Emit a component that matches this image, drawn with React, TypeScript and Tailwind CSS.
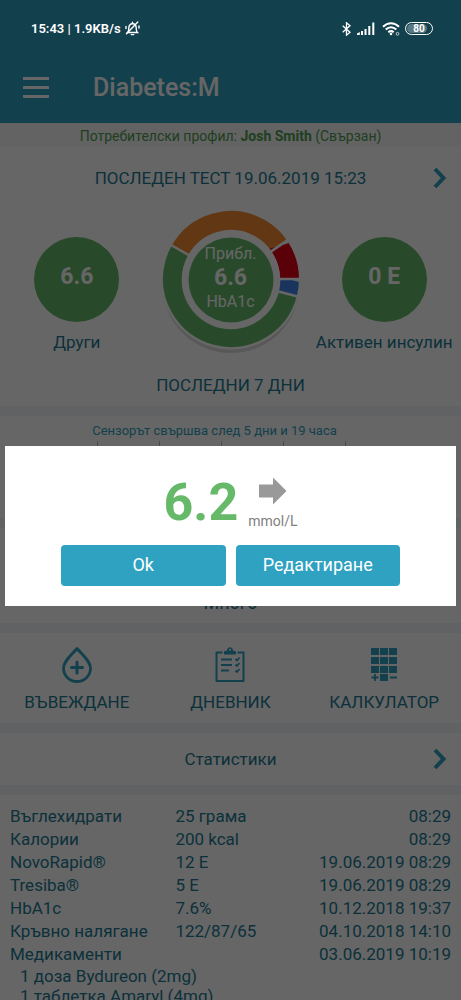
import { useState } from "react"
import type { ReactNode } from "react"

const stats = [
  { name: "Въглехидрати", value: "25 грама", time: "08:29" },
  { name: "Калории", value: "200 kcal", time: "08:29" },
  { name: "NovoRapid®", value: "12 E", time: "19.06.2019 08:29" },
  { name: "Tresiba®", value: "5 E", time: "19.06.2019 08:29" },
  { name: "HbA1c", value: "7.6%", time: "10.12.2018 19:37" },
  { name: "Кръвно налягане", value: "122/87/65", time: "04.10.2018 14:10" },
  { name: "Медикаменти", value: "", time: "03.06.2019 10:19" },
]

const medications = ["1 доза Bydureon (2mg)", "1 таблетка Amaryl (4mg)"]

// start / sweep in degrees, clockwise from three o'clock
const segments = [
  { start: 0, sweep: 14.7, color: "#4285e8" },
  { start: 14.7, sweep: 194.8, color: "#67b96a" },
  { start: 209.5, sweep: 116, color: "#f58b32" },
  { start: 325.5, sweep: 34.5, color: "#e20018" },
]

function StatusBar() {
  return (
    <div className="relative z-20 flex h-[51px] items-center justify-between pt-[6px] pr-7 pl-[31px] text-white">
      <div className="flex items-center gap-1 text-[13px] font-semibold">
        <span>15:43 | 1.9KB/s</span>
        <svg width="15" height="15" viewBox="0 0 15 15" fill="none" stroke="currentColor" strokeWidth="1.4" strokeLinecap="round">
          <path d="M2.5 11.5c1-1 1.3-2 1.3-4.3C3.8 4.5 5.3 2.8 7.5 2.8c2.2 0 3.7 1.7 3.7 4.4 0 2.3.4 3.3 1.3 4.300z" />
          <path d="M6.2 13.6h2.6M1.5 12.8 12.8 1M7.5 1.3v1M1 5.5v2M14 5v2" />
        </svg>
      </div>
      <div className="flex items-center">
        <svg width="9" height="14" viewBox="0 0 9 14" fill="none" stroke="currentColor" strokeWidth="1.3">
          <path d="M.7 3.8 8 10.3 4.5 13.2V.8L8 3.7.7 10.2" />
        </svg>
        <svg className="ml-[6px]" width="18" height="13" viewBox="0 0 18 13" fill="currentColor">
          <path d="M0 13v-1.5L2.8 10v3zM4 9h2v4H4zM7.5 7h2v6h-2zM11.3 4h2v9h-2zM15.3 .5h2V13h-2z" />
        </svg>
        <svg className="ml-[7px]" width="19" height="14" viewBox="0 0 19 14" fill="none" stroke="currentColor" strokeWidth="2">
          <path d="M1 4.7C5.8 0 12.2 0 17 4.7M3.7 7.6c3.2-3 7.4-3 10.6 0M6.3 10.300c1.700-1.500 3.700-1.500 5.400 0" />
          <circle cx="9" cy="12" r="1.3" fill="currentColor" stroke="none" />
          <circle cx="15.5" cy="11.8" r="1.4" strokeWidth="1" opacity=".7" />
        </svg>
        <span className="relative ml-1 flex h-[13px] w-7 items-center justify-center rounded-full border border-white text-[10px] leading-none font-bold">
          <span className="absolute inset-y-px left-px w-5 rounded-full bg-white/30" />
          <span className="relative">80</span>
        </span>
      </div>
    </div>
  )
}

function Chevron() {
  return (
    <svg width="14" height="22" viewBox="0 0 14 22" fill="none" stroke="#2fa1c1" strokeWidth="4">
      <path d="M2 2l8.5 9L2 20" />
    </svg>
  )
}

function Bubble({ value, label }: { value: string; label: string }) {
  return (
    <div className="flex flex-col items-center pt-[27px]">
      <div className="flex size-[85px] items-center justify-center rounded-full bg-[#67b96a] pb-1 text-[23px] font-bold text-white">
        {value}
      </div>
      <div className="mt-2 leading-6 whitespace-nowrap">{label}</div>
    </div>
  )
}

function Donut() {
  return (
    <div className="relative flex justify-center">
      <svg width="141" height="145" viewBox="-71 -69 141 145">
        <circle cx="0" cy="5.5" r="68.5" fill="#dcdcdc" />
        <circle cx="0" cy="0.5" r="70" fill="#fff" />
        {segments.map((s) => (
          <circle
            key={s.color}
            r="58.5"
            fill="none"
            stroke={s.color}
            strokeWidth="19"
            pathLength="360"
            strokeDasharray={`${s.sweep} ${360 - s.sweep}`}
            transform={`rotate(${s.start})`}
          />
        ))}
        {segments.map((s) => (
          <path key={s.color} d="M47 0H70" stroke="#fff" strokeWidth="2.5" transform={`rotate(${s.start})`} />
        ))}
        <circle cx="0" cy="1" r="49.3" fill="#fff" />
        <circle cx="0" cy="1" r="42.5" fill="#67b96a" />
      </svg>
      <div className="absolute inset-0 flex flex-col items-center pt-8 text-center text-white">
        <span className="text-base leading-6">Прибл.</span>
        <span className="text-[23px] leading-6 font-bold">6.6</span>
        <span className="text-base leading-6">HbA1c</span>
      </div>
    </div>
  )
}

function NavButton({ label, children }: { label: string; children: ReactNode }) {
  return (
    <button type="button" className="flex flex-col items-center pt-3 pb-[9px]">
      <svg width="38" height="38" viewBox="0 0 38 38" fill="none" stroke="#2fa1c1">
        {children}
      </svg>
      <span className="mt-1 pt-[3px] leading-6">{label}</span>
    </button>
  )
}

function GlucoseDialog({ onClose }: { onClose: () => void }) {
  return (
    <div className="absolute inset-0 z-10 flex items-center justify-center bg-black/60 px-[5px] pt-[51px]">
      <div role="dialog" aria-modal="true" aria-label="6.2 mmol/L" className="w-full bg-white px-14 pt-7 pb-5">
        <div className="flex justify-center gap-[10px]">
          <span className="text-[52px] leading-[58px] font-bold text-[#67b96a]">6.2</span>
          <div className="flex h-[60px] flex-col">
            <svg className="mt-[3px] ml-[11px]" width="28" height="28" viewBox="0 0 28 28" fill="#999">
              <path d="M0 7.5h14V.5L27.5 14 14 27.5v-7H0z" />
            </svg>
            <span className="mt-[6px] text-sm leading-5 text-[#808080]">mmol/L</span>
          </div>
        </div>
        <div className="mt-[11px] flex gap-[10px]">
          <button type="button" onClick={onClose} className="h-[41px] flex-1 rounded bg-[#2fa1c1] text-lg text-white">
            Ok
          </button>
          <button type="button" onClick={onClose} className="h-[41px] flex-1 rounded bg-[#2fa1c1] text-lg text-white">
            Редактиране
          </button>
        </div>
      </div>
    </div>
  )
}

export default function App() {
  const [open, setOpen] = useState(true)

  return (
    <div className="relative h-screen overflow-hidden bg-[#f3f4fa] font-[Roboto,sans-serif] text-[17px] text-[#217a94]">
      <header className="bg-[#2fa1c1]">
        <StatusBar />
        <div className="flex h-[72px] items-center gap-11 pl-[23px] text-white">
          <button type="button" aria-label="Меню" className="flex w-[26px] flex-col gap-[6px]">
            <span className="h-[3px] bg-white" />
            <span className="h-[3px] bg-white" />
            <span className="h-[3px] bg-white" />
          </button>
          <h1 className="pt-0.5 text-[25px] font-medium">Diabetes:M</h1>
        </div>
      </header>

      <p className="h-6 bg-[#f7f7f8] text-center text-sm leading-[26px] text-[#4f9d52]">
        Потребителски профил: <b>Josh Smith</b> (Свързан)
      </p>

      <main className="flex flex-col gap-[10px]">
        <section className="bg-white pt-[17px] pb-[7px]">
          <div className="grid grid-cols-[1fr_auto_1fr] items-center px-[14px]">
            <h2 className="col-start-2 leading-7">ПОСЛЕДЕН ТЕСТ 19.06.2019 15:23</h2>
            <button type="button" aria-label="Последен тест" className="justify-self-end">
              <Chevron />
            </button>
          </div>
          <div className="mt-[18px] grid grid-cols-3">
            <Bubble value="6.6" label="Други" />
            <Donut />
            <Bubble value="0 E" label="Активен инсулин" />
          </div>
          <h2 className="mt-4 text-center leading-7">ПОСЛЕДНИ 7 ДНИ</h2>
        </section>

        <section className="h-[102px] bg-white pt-[5px]">
          <p className="pr-8 text-center text-[13px] leading-5 text-[#2fa1c1]">Сензорът свършва след 5 дни и 19 часа</p>
          <div className="mr-[115px] ml-[97px] flex h-16 justify-between">
            {[0, 1, 2, 3, 4].map((i) => (
              <span key={i} className="w-px bg-[#b8b8b8]" />
            ))}
          </div>
        </section>

        <section className="flex h-[95px] items-end justify-center bg-white pb-2">
          <button type="button" className="text-lg leading-6">Много</button>
        </section>

        <nav className="grid grid-cols-3 bg-white">
          <NavButton label="ВЪВЕЖДАНЕ">
            <path d="M19 3.5C14 9.5 5.5 16 5.5 23.3a13.5 13.2 0 0 0 27 0C32.5 16 24 9.5 19 3.500z" strokeWidth="2.8" strokeLinejoin="round" />
            <path d="M19 17v11M13.5 22.5h11" strokeWidth="3" strokeLinecap="round" />
          </NavButton>
          <NavButton label="ДНЕВНИК">
            <path d="M11.5 7.5H5.5V36H32.5V7.5H26.5" strokeWidth="2" strokeLinejoin="round" />
            <path d="M13 9.5V6.500l3-1C16 1 22 1 22 5.5l3 1v3z" fill="#2fa1c1" stroke="none" />
            <circle cx="19" cy="4.8" r="1" fill="#fff" stroke="none" />
            <path d="M10 14.5h11M10 20h11M10 25.5h8" strokeWidth="1.8" />
            <path d="M24.5 14l1.5 1.5 2.5-3M24.5 19.5 26 21l2.5-3M24.5 25.5 26 27l2.5-3" strokeWidth="1.8" />
          </NavButton>
          <NavButton label="КАЛКУЛАТОР">
            <path
              d="M6 3h8v7H6zM15 3h8v7h-8zM24 3h8v7h-8zM6 12h8v7H6zM15 12h8v7h-8zM24 12h8v7h-8zM6 21h8v7H6zM15 21h8v7h-8zM24 21h8v7h-8zM15 29h8v7h-8z"
              fill="#2fa1c1"
              stroke="none"
            />
            <path d="M6.5 32.5h7M10 29v7M25 32.5h7" strokeWidth="1.8" />
          </NavButton>
        </nav>

        <section className="grid grid-cols-[1fr_auto_1fr] items-center bg-white px-[14px] py-3">
          <h2 className="col-start-2 leading-7">Статистики</h2>
          <button type="button" aria-label="Статистики" className="justify-self-end">
            <Chevron />
          </button>
        </section>

        <section className="bg-white px-[10px] pt-[10px] pb-4">
          <table className="w-full leading-[23px]">
            <tbody>
              {stats.map((row) => (
                <tr key={row.name}>
                  <th scope="row" className="w-3/8 p-0 text-left font-normal">{row.name}</th>
                  <td className="p-0">{row.value}</td>
                  <td className="p-0 text-right">{row.time}</td>
                </tr>
              ))}
            </tbody>
          </table>
          <ul className="pl-[10px] leading-5">
            {medications.map((m) => (
              <li key={m}>{m}</li>
            ))}
          </ul>
        </section>
      </main>

      {open && <GlucoseDialog onClose={() => setOpen(false)} />}
    </div>
  )
}
